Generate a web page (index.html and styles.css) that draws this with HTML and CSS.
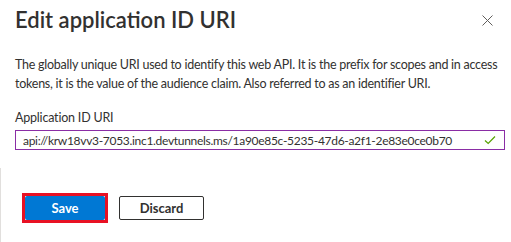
FILE: index.html
```html
<!DOCTYPE html>
<html lang="en">
<head>
    <meta charset="UTF-8">
    <title>Edit application ID URI</title>
    <link rel="stylesheet" href="styles.css">
</head>
<body>

<div class="panel">
    <div class="header">
        <h2>Edit application ID URI</h2>
        <button class="close" aria-label="Close">
            <svg width="11" height="11" viewBox="0 0 11 11"><path d="M0.5 0.5L10.5 10.5M10.5 0.5L0.5 10.5" stroke="#605e5c" stroke-width="1" fill="none"/></svg>
        </button>
    </div>

    <p class="desc">The globally unique URI used to identify this web API. It is the prefix for scopes and in access tokens, it is the value of the audience claim. Also referred to as an identifier URI.</p>

    <label class="label" for="uri">Application ID URI</label>
    <div class="field">
        <input type="text" id="uri" value="api://krw18vv3-7053.inc1.devtunnels.ms/1a90e85c-5235-47d6-a2f1-2e83e0ce0b70" readonly>
        <svg class="check" width="12" height="10" viewBox="0 0 12 10"><path d="M1 5.5L4.2 8.5L11 1.5" stroke="#57a300" stroke-width="1.2" fill="none"/></svg>
    </div>
</div>

<div class="footer">
    <span class="highlight"><button class="primary">Save</button></span>
    <button class="secondary">Discard</button>
</div>

</body>
</html>
```

FILE: styles.css
```css
body {
    margin: 0;
    font-family: Lato, "Liberation Sans", sans-serif;
    color: #323130;
    background: #fff;
}
.panel {
    padding: 0 6px 0 15px;
}
.header {
    display: flex;
    justify-content: space-between;
    align-items: center;
    height: 38px;
}
.header h2 {
    margin: 0;
    font-size: 22px;
    font-weight: 600;
    color: #323130;
}
.close {
    border: none;
    background: none;
    padding: 0;
    margin-right: 12px;
    width: 11px;
    height: 11px;
}
.desc {
    margin: 17px 0 0;
    font-size: 12.5px;
    letter-spacing: -0.25px;
    line-height: 19px;
}
.label {
    display: block;
    margin-top: 16px;
    font-size: 12.5px;
    letter-spacing: -0.2px;
    line-height: 18px;
}
.field {
    display: flex;
    align-items: center;
    height: 18px;
    margin-top: 3px;
    border: 1px solid #8a2da5;
    padding: 0 8px 0 7px;
}
.field input {
    flex: 1;
    border: none;
    outline: none;
    padding: 0;
    font-family: inherit;
    font-size: 12px;
    letter-spacing: -0.3px;
    color: #323130;
    background: none;
}
.footer {
    display: flex;
    align-items: flex-start;
    gap: 11px;
    margin-top: 18px;
    padding: 25px 0 0 21px;
    border-left: 1px solid #e1dfdd;
    height: 49px;
}
.highlight {
    display: inline-block;
    border: 3px solid #e81123;
}
button.primary {
    display: block;
    width: 80px;
    height: 24px;
    background: #0078d4;
    color: #fff;
    border: none;
    border-radius: 2px;
    font-family: inherit;
    font-size: 13px;
    font-weight: 700;
}
button.secondary {
    margin-top: 3px;
    width: 85px;
    height: 24px;
    background: #fff;
    color: #323130;
    border: 1px solid #323130;
    border-radius: 2px;
    font-family: inherit;
    font-size: 13px;
    font-weight: 700;
}
```
